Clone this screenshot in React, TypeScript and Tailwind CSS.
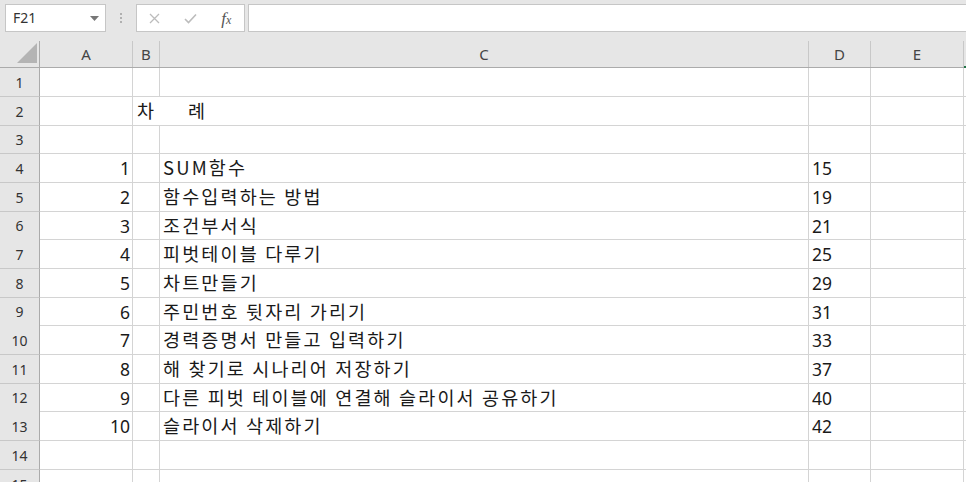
import React from "react";

const rows: { n: number; a?: string; b?: string; c?: string; d?: string; h: number }[] = [
  { n: 1, h: 29 },
  { n: 2, b: "차     례", h: 29 },
  { n: 3, h: 28 },
  { n: 4, a: "1", c: "SUM함수", d: "15", h: 29 },
  { n: 5, a: "2", c: "함수입력하는 방법", d: "19", h: 29 },
  { n: 6, a: "3", c: "조건부서식", d: "21", h: 28 },
  { n: 7, a: "4", c: "피벗테이블 다루기", d: "25", h: 29 },
  { n: 8, a: "5", c: "차트만들기", d: "29", h: 29 },
  { n: 9, a: "6", c: "주민번호 뒷자리 가리기", d: "31", h: 28 },
  { n: 10, a: "7", c: "경력증명서 만들고 입력하기", d: "33", h: 29 },
  { n: 11, a: "8", c: "해 찾기로 시나리어 저장하기", d: "37", h: 29 },
  { n: 12, a: "9", c: "다른 피벗 테이블에 연결해 슬라이서 공유하기", d: "40", h: 28 },
  { n: 13, a: "10", c: "슬라이서 삭제하기", d: "42", h: 29 },
  { n: 14, h: 29 },
  { n: 15, h: 29 },
];

const font = { fontFamily: '"Noto Sans CJK KR", "Noto Sans", sans-serif' };
const numFont = { fontFamily: '"Noto Sans", "Noto Sans CJK KR", sans-serif' };

export default function App() {
  return (
    <div className="w-[966px] h-[482px] overflow-hidden bg-[#e6e6e6] relative" style={font}>
      {/* toolbar */}
      <div className="h-[41px] flex items-start pt-[4px]">
        <div className="ml-[5px] w-[101px] h-[28px] bg-white border border-[#c6c6c6] flex items-center pl-[7px] pr-[6px] justify-between">
          <span className="text-[14px] text-[#333] leading-none" style={numFont}>F21</span>
          <svg width="9" height="5" viewBox="0 0 9 5"><path d="M0 0h9L4.5 5z" fill="#777" /></svg>
        </div>
        <div className="w-[30px] h-[28px] flex flex-col items-center justify-center gap-[2px]">
          <div className="w-[2px] h-[2px] bg-[#b0b0b0]" />
          <div className="w-[2px] h-[2px] bg-[#b0b0b0]" />
          <div className="w-[2px] h-[2px] bg-[#b0b0b0]" />
        </div>
        <div className="w-[109px] h-[28px] bg-white border border-[#c6c6c6] flex items-center">
          <div className="w-[36px] flex justify-center">
            <svg width="11" height="11" viewBox="0 0 11 11"><path d="M1 1L10 10M10 1L1 10" stroke="#bcbcbc" strokeWidth="1.3" /></svg>
          </div>
          <div className="w-[36px] flex justify-center">
            <svg width="13" height="11" viewBox="0 0 13 11"><path d="M1 6L4.5 9.5L12 1.5" stroke="#bcbcbc" strokeWidth="1.6" fill="none" /></svg>
          </div>
          <div className="w-[36px] flex justify-center">
            <span className="text-[17px] italic text-[#555] leading-none" style={{ fontFamily: '"Liberation Serif", serif' }}>f<span className="text-[12px]">x</span></span>
          </div>
        </div>
        <div className="ml-[3px] flex-1 h-[28px] bg-white border border-[#c6c6c6] border-r-0" />
      </div>

      {/* column header */}
      <div className="grid grid-cols-[40px_93px_27px_649px_62px_93px_1fr] h-[27px] border-b border-[#ababab]">
        <div className="border-r border-[#ababab] relative">
          <svg className="absolute left-[17px] top-[2px]" width="20" height="20" viewBox="0 0 20 20"><path d="M20 0V20H0z" fill="#b4b4b4" /></svg>
        </div>
        {["A", "B", "C", "D", "E"].map((c) => (
          <div key={c} className="border-r border-[#c8c8c8] flex items-center justify-center text-[15px] text-[#444]" style={numFont}>
            {c}
          </div>
        ))}
        <div className="relative">
          <div className="absolute left-0 right-0 bottom-[-1px] h-[2px] bg-[#217346]" />
        </div>
      </div>

      {/* rows */}
      {rows.map((r) => (
        <div
          key={r.n}
          className="grid grid-cols-[40px_93px_27px_649px_62px_93px_1fr] border-b border-[#d4d4d4] bg-white"
          style={{ height: r.h }}
        >
          <div className="bg-[#e6e6e6] border-r border-[#ababab] flex items-center justify-center text-[14px] text-[#333] -mb-px border-b border-b-[#c8c8c8]" style={numFont}>
            {r.n}
          </div>
          <div className="border-r border-[#d4d4d4] flex items-center justify-end pr-[2px] text-[17.5px] text-[#1a1a1a]" style={numFont}>{r.a}</div>
          <div className={`flex items-center pl-[4px] text-[18.5px] tracking-[2.2px] text-[#1a1a1a] whitespace-pre overflow-visible relative z-10 ${r.b ? "" : "border-r border-[#d4d4d4]"}`}>
            {r.b}
          </div>
          <div className={`border-r border-[#d4d4d4] flex items-center pl-[3px] text-[18.5px] tracking-[2.15px] text-[#1a1a1a] whitespace-pre ${r.b ? "border-l border-l-white" : ""}`}>{r.c}</div>
          <div className="border-r border-[#d4d4d4] flex items-center pl-[3px] text-[17.5px] text-[#1a1a1a]" style={numFont}>{r.d}</div>
          <div className="border-r border-[#d4d4d4]" />
          <div />
        </div>
      ))}
    </div>
  );
}
